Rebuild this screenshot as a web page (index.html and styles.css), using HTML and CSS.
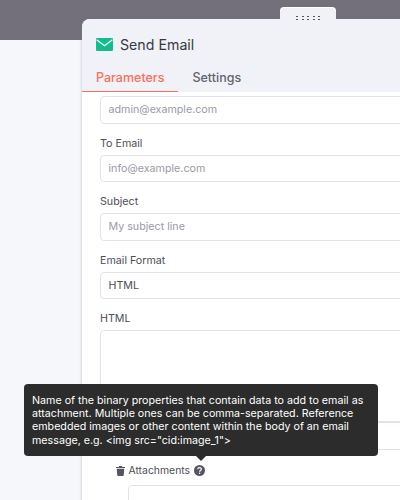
FILE: index.html
```html
<!DOCTYPE html>
<html>
<head>
    <meta charset="UTF-8">
    <title>Send Email</title>
    <link rel="stylesheet" href="styles.css">
</head>
<body>
    <div class="top_bar"></div>

    <div class="panel">
        <div class="grip">
            <span></span><span></span><span></span><span></span><span></span>
        </div>

        <div class="panel_head">
            <div class="title">
                <svg class="mail_icon" width="17" height="13" viewBox="0 0 17 13">
                    <rect width="17" height="13" rx="1" fill="#12bc8b"/>
                    <path d="M0.6 1.8 8.5 7.8 16.4 1.8" fill="none" stroke="#fff" stroke-width="1.3"/>
                </svg>
                <span>Send Email</span>
            </div>
            <div class="tabs">
                <div class="tab active">Parameters</div>
                <div class="tab">Settings</div>
            </div>
        </div>

        <div class="panel_body">
            <div class="box placeholder">admin@example.com</div>

            <div class="label">To Email</div>
            <div class="box placeholder">info@example.com</div>

            <div class="label">Subject</div>
            <div class="box placeholder">My subject line</div>

            <div class="label">Email Format</div>
            <div class="box">HTML</div>

            <div class="label">HTML</div>
            <div class="box big"></div>
            <div class="box"></div>

            <div class="label attach_label">
                <svg class="trash" width="9" height="10" viewBox="0 0 10 11">
                    <path d="M3.5 0h3l.5 1h3v1.2H0V1h3zM.8 3h8.4l-.6 7.2a.9.9 0 0 1-.9.8H2.3a.9.9 0 0 1-.9-.8z" fill="#55555f"/>
                </svg>
                <span>Attachments</span>
                <svg width="11" height="11" viewBox="0 0 11 11">
                    <circle cx="5.5" cy="5.5" r="5.5" fill="#55555f"/>
                    <path d="M3.7 4.3c0-2.3 3.7-2.3 3.7-.2 0 1.3-1.8 1.3-1.8 2.6" fill="none" stroke="#fff" stroke-width="1.2"/>
                    <rect x="4.9" y="7.6" width="1.3" height="1.3" fill="#fff"/>
                </svg>
            </div>
            <div class="box indent"></div>
        </div>
    </div>

    <div class="tooltip">
        Name of the binary properties that contain data to add to email as attachment. Multiple ones can be comma-separated. Reference embedded images or other content within the body of an email message, e.g. &lt;img src="cid:image_1"&gt;
    </div>
</body>
</html>
```

FILE: styles.css
```css
*{
    margin: 0;
    padding: 0;
    box-sizing: border-box;
}
html,body{
    height: 500px;
    overflow: hidden;
}
body{
    position: relative;
    background: #f6f7fb;
    font-family: Inter, "Liberation Sans", sans-serif;
    color: #4d4d57;
}
.top_bar{
    height: 40px;
    background: #73707b;
}
.panel{
    position: relative;
    width: 330px;
    margin: -21px 0 0 82px;
    border-radius: 8px 0 0 0;
    background: #fff;
    box-shadow: -1px 0 2px rgba(120,125,150,.25);
}
.grip{
    position: absolute;
    top: -11px;
    left: 198px;
    width: 56px;
    height: 14px;
    display: flex;
    justify-content: center;
    gap: 3.5px;
    padding-top: 7px;
    border-radius: 4px 4px 0 0;
    background: #f0f2f8;
    box-shadow: 0 -1px 0 #fff;
}
.grip span{
    width: 2px;
    height: 6px;
    background: radial-gradient(circle at center, #55555e 0, #55555e 1px, transparent 1px) 0 0/2px 3px;
}
.panel_head{
    height: 73px;
    border-radius: 8px 0 0 0;
    background: #f0f2f8;
}
.title{
    display: flex;
    align-items: center;
    gap: 7px;
    height: 45px;
    padding: 5px 0 0 14px;
    font-size: 14.2px;
    color: #38383f;
}
.tabs{
    display: flex;
    height: 28px;
}
.tab{
    padding: 0 14px;
    font-size: 12.5px;
    font-weight: 500;
    line-height: 27px;
    color: #63636d;
}
.tab.active{
    color: #ff6d5a;
    border-bottom: 1px solid #ff6d5a;
}
.panel_body{
    padding: 4px 0 0 18px;
}
.label{
    margin-top: 12px;
    height: 19px;
    font-size: 10.7px;
    line-height: 16px;
}
.box{
    height: 27.5px;
    padding-left: 7.5px;
    border: 1px solid #dfe3ef;
    border-radius: 4px;
    background: #fff;
    font-size: 10.7px;
    line-height: 26px;
}
.placeholder{
    color: #9a9aa3;
}
.big{
    height: 92px;
    border-radius: 4px 4px 0 0;
}
.attach_label{
    display: flex;
    align-items: center;
    gap: 4px;
    margin: 12px 0 5px 0;
    padding-left: 15.5px;
    height: 18px;
    font-size: 10.4px;
}
.indent{
    margin-left: 28px;
}
.tooltip{
    position: absolute;
    top: 384px;
    left: 24px;
    width: 354px;
    height: 72px;
    padding: 10px 8px;
    border-radius: 4px;
    background: #2b2c2b;
    box-shadow: 0 0 1px #fff;
    font-size: 10.7px;
    line-height: 13.2px;
    color: #fff;
}
.tooltip::after{
    content: "";
    position: absolute;
    left: 172px;
    bottom: -5px;
    border-left: 5px solid transparent;
    border-right: 5px solid transparent;
    border-top: 5px solid #2b2c2b;
}
```
